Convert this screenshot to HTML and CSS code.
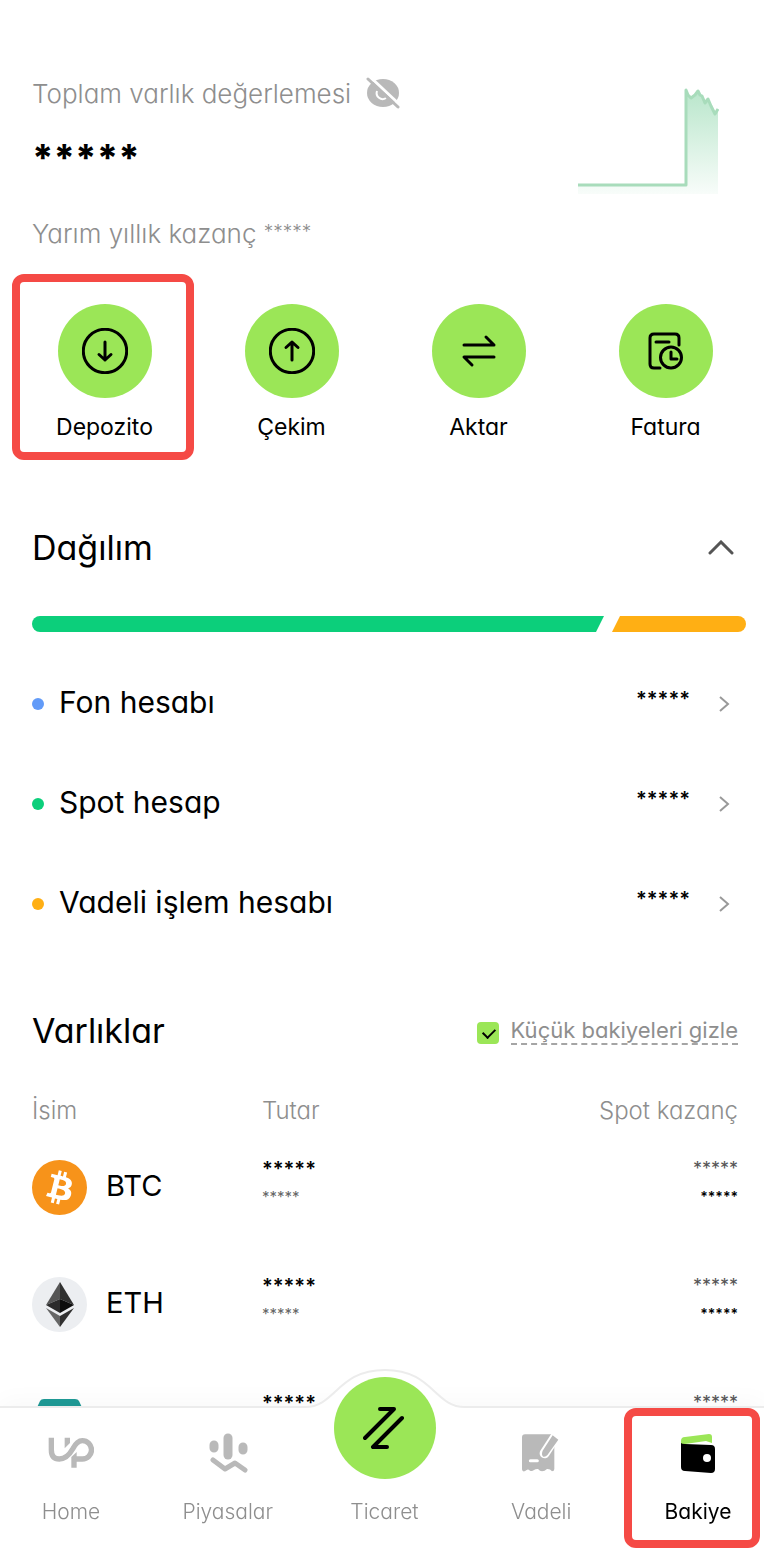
FILE: index.html
```html
<!DOCTYPE html>
<html lang="tr">
<head>
    <meta charset="UTF-8">
    <meta name="viewport" content="width=device-width, initial-scale=1.0">
    <title>Bakiye</title>
    <link rel="stylesheet" href="styles.css">
</head>
<body>
    <main>
        <section class="summary">
            <div class="summary-info">
                <div class="summary-label">
                    <span>Toplam varlık değerlemesi</span>
                    <button class="icon-btn" aria-label="Bakiyeyi göster">
                        <svg width="34" height="34" viewBox="0 0 34 34">
                            <ellipse cx="17" cy="17" rx="16" ry="14" fill="#b9b9b9"/>
                            <path d="M11 15a6 6 0 0 0 9 7" fill="none" stroke="#fff" stroke-width="2"/>
                            <path d="M3 0L34 29" stroke="#fff" stroke-width="3"/>
                            <path d="M2 3L32 31" stroke="#b9b9b9" stroke-width="3" stroke-linecap="round"/>
                        </svg>
                    </button>
                </div>
                <p class="total">*****</p>
                <p class="profit">Yarım yıllık kazanç <span class="profit-value">*****</span></p>
            </div>
            <svg class="chart" width="142" height="106" viewBox="0 0 142 106">
                <defs>
                    <linearGradient id="chartFill" x1="0" y1="0" x2="0" y2="1">
                        <stop offset="0" stop-color="#b9e6cb"/>
                        <stop offset="1" stop-color="#b9e6cb" stop-opacity="0.1"/>
                    </linearGradient>
                </defs>
                <path d="M1 97H109V2L111 7L114 10L118 7L121 3L123 7L125 8L128 15L131 11L134 18L138 26L141 21V106H1Z" fill="url(#chartFill)"/>
                <path d="M1 97H109V2L111 7L114 10L118 7L121 3L123 7L125 8L128 15L131 11L134 18L138 26L141 21" fill="none" stroke="#a8dcbb" stroke-width="3" stroke-linejoin="round"/>
            </svg>
        </section>

        <section class="actions">
            <button class="action highlight">
                <span class="action-icon">
                    <svg width="46" height="46" viewBox="0 0 46 46">
                        <circle cx="23" cy="23" r="21.7"/>
                        <path d="M23 14V32M17 26.500L23 32L29 26.500"/>
                    </svg>
                </span>
                Depozito
            </button>
            <button class="action">
                <span class="action-icon">
                    <svg width="46" height="46" viewBox="0 0 46 46">
                        <circle cx="23" cy="23" r="21.7"/>
                        <path d="M23 32V14M17 19.500L23 14L29 19.500"/>
                    </svg>
                </span>
                Çekim
            </button>
            <button class="action">
                <span class="action-icon">
                    <svg width="46" height="46" viewBox="0 0 46 46">
                        <path d="M8 17H38L30 9M38 29H8L16 37"/>
                    </svg>
                </span>
                Aktar
            </button>
            <button class="action">
                <span class="action-icon">
                    <svg width="46" height="46" viewBox="0 0 46 46">
                        <path d="M17 40H11Q7 40 7 36V10Q7 6 11 6H32Q36 6 36 10V17M13 14H26"/>
                        <circle cx="28" cy="29.500" r="10.500"/>
                        <path d="M28 24V31H34"/>
                    </svg>
                </span>
                Fatura
            </button>
        </section>

        <section class="distribution">
            <div class="section-head">
                <h2>Dağılım</h2>
                <button class="icon-btn" aria-label="Daralt">
                    <svg width="26" height="16" viewBox="0 0 26 16">
                        <path d="M2 13L13 2L24 13" fill="none" stroke="#555" stroke-width="3" stroke-linecap="round"/>
                    </svg>
                </button>
            </div>
            <div class="bar">
                <div class="bar-spot"></div>
                <div class="bar-futures"></div>
            </div>
            <ul class="accounts">
                <li>
                    <a href="#">
                        <span class="dot blue"></span>
                        <span class="account-name">Fon hesabı</span>
                        <span class="stars">*****</span>
                        <svg width="12" height="18" viewBox="0 0 12 18"><path d="M2 2L10 9L2 16"/></svg>
                    </a>
                </li>
                <li>
                    <a href="#">
                        <span class="dot green"></span>
                        <span class="account-name">Spot hesap</span>
                        <span class="stars">*****</span>
                        <svg width="12" height="18" viewBox="0 0 12 18"><path d="M2 2L10 9L2 16"/></svg>
                    </a>
                </li>
                <li>
                    <a href="#">
                        <span class="dot orange"></span>
                        <span class="account-name">Vadeli işlem hesabı</span>
                        <span class="stars">*****</span>
                        <svg width="12" height="18" viewBox="0 0 12 18"><path d="M2 2L10 9L2 16"/></svg>
                    </a>
                </li>
            </ul>
        </section>

        <section class="assets">
            <div class="assets-head">
                <h2>Varlıklar</h2>
                <div class="hide-small">
                    <input type="checkbox" id="hideSmall" checked>
                    <label for="hideSmall">Küçük bakiyeleri gizle</label>
                </div>
            </div>
            <table>
                <thead>
                    <tr>
                        <th class="col-name">İsim</th>
                        <th>Tutar</th>
                        <th class="col-profit">Spot kazanç</th>
                    </tr>
                </thead>
                <tbody>
                    <tr>
                        <td>
                            <div class="coin">
                                <svg width="55" height="55" viewBox="0 0 32 32">
                                    <circle cx="16" cy="16" r="16" fill="#f7931a"/>
                                    <path fill="#fff" d="M23.189 14.020c.314-2.096-1.283-3.223-3.465-3.975l.708-2.840-1.728-.430-.690 2.765c-.454-.114-.920-.220-1.385-.326l.695-2.783L15.596 6l-.708 2.839c-.376-.086-.746-.170-1.104-.260l.002-.009-2.384-.595-.460 1.846s1.283.294 1.256.312c.700.175.826.638.805 1.006l-.806 3.235c.048.012.110.030.180.057l-.183-.045-1.130 4.532c-.086.212-.303.531-.793.410.018.025-1.256-.313-1.256-.313l-.858 1.978 2.250.561c.418.105.828.215 1.231.318l-.715 2.872 1.727.430.708-2.840c.472.127.930.245 1.378.357l-.706 2.828 1.728.430.715-2.866c2.948.558 5.164.333 6.097-2.333.752-2.146-.037-3.385-1.588-4.192 1.130-.260 1.980-1.003 2.207-2.538zm-3.950 5.538c-.533 2.147-4.148.986-5.320.695l.950-3.805c1.172.293 4.929.872 4.370 3.110zm.535-5.569c-.487 1.953-3.495.960-4.470.717l.860-3.450c.975.243 4.118.696 3.610 2.733z"/>
                                </svg>
                                <span>BTC</span>
                            </div>
                        </td>
                        <td class="values">
                            <div class="amount">*****</div>
                            <div class="amount-sub">*****</div>
                        </td>
                        <td class="values col-profit">
                            <div class="profit-main">*****</div>
                            <div class="profit-sub">*****</div>
                        </td>
                    </tr>
                    <tr>
                        <td>
                            <div class="coin">
                                <svg width="55" height="55" viewBox="0 0 55 55">
                                    <circle cx="27.500" cy="27.500" r="27.500" fill="#eceef1"/>
                                    <path d="M28 5L14 28L28 22Z" fill="#555"/>
                                    <path d="M28 5L42 28L28 22Z" fill="#303030"/>
                                    <path d="M14 28L28 22V36Z" fill="#2b2b2b"/>
                                    <path d="M42 28L28 22V36Z" fill="#0d0d0d"/>
                                    <path d="M14 31L28 39V50Z" fill="#666"/>
                                    <path d="M42 31L28 39V50Z" fill="#303030"/>
                                </svg>
                                <span>ETH</span>
                            </div>
                        </td>
                        <td class="values">
                            <div class="amount">*****</div>
                            <div class="amount-sub">*****</div>
                        </td>
                        <td class="values col-profit">
                            <div class="profit-main">*****</div>
                            <div class="profit-sub">*****</div>
                        </td>
                    </tr>
                    <tr>
                        <td>
                            <div class="coin">
                                <svg width="55" height="55" viewBox="0 0 55 55">
                                    <path d="M12 5H43Q46 5 47 7L54 22L27 50L1 22L8 7Q9 5 12 5Z" fill="#1f9a96"/>
                                    <path d="M14 12H41V17H14Z" fill="#fff"/>
                                </svg>
                                <span>USDT</span>
                            </div>
                        </td>
                        <td class="values">
                            <div class="amount">*****</div>
                            <div class="amount-sub">*****</div>
                        </td>
                        <td class="values col-profit">
                            <div class="profit-main">*****</div>
                            <div class="profit-sub">*****</div>
                        </td>
                    </tr>
                </tbody>
            </table>
        </section>
    </main>

    <nav class="tabs">
        <a href="#" class="tab">
            <span class="tab-icon">
                <svg width="46" height="32" viewBox="0 0 138 96">
                    <path d="M10 2V38C10 57 19 66 34 66C55 66 66 50 74 36C84 17 92 11 103 11A27 27 0 0 1 103 66H84" fill="none" stroke="#b9b9b9" stroke-width="16"/>
                    <path d="M50 2H66V18L50 34ZM70 60L86 45V92H70Z" fill="#b9b9b9"/>
                </svg>
            </span>
            Home
        </a>
        <a href="#" class="tab">
            <span class="tab-icon">
                <svg width="40" height="40" viewBox="0 0 40 40" fill="none" stroke="#b9b9b9" stroke-linecap="round" stroke-linejoin="round">
                    <path d="M6 12V15M35 14V17" stroke-width="9"/>
                    <path d="M20 5V22" stroke-width="9"/>
                    <path d="M5 27L17 36L27 30L37 37" stroke-width="5"/>
                </svg>
            </span>
            Piyasalar
        </a>
        <a href="#" class="tab trade">
            <svg class="bump" width="160" height="40" viewBox="0 0 160 40">
                <path d="M0 38C31 38 32 1 80 1C128 1 129 38 160 38V40H0Z" fill="#fff"/>
                <path d="M0 38C31 38 32 1 80 1C128 1 129 38 160 38" fill="none" stroke="#ececec" stroke-width="2"/>
            </svg>
            <span class="trade-icon">
                <svg width="44" height="44" viewBox="0 0 44 44" fill="none" stroke="#000" stroke-width="4" stroke-linecap="round" stroke-linejoin="round">
                    <path d="M17 3H31L2 32M39 12L10 41H24"/>
                </svg>
            </span>
            Ticaret
        </a>
        <a href="#" class="tab">
            <span class="tab-icon">
                <svg width="38" height="38" viewBox="0 0 114 114">
                    <path d="M9 1H97V105Q97 112 90 112Q84 104 75 105Q68 112 60 112Q54 112 48 105Q42 104 36 108Q30 113 24 110Q18 104 14 108Q8 113 4 112Q0 111 0 106V10Q0 1 9 1Z" fill="#b9b9b9"/>
                    <path d="M108 -4L68 58" fill="none" stroke="#fff" stroke-width="30" stroke-linecap="round"/>
                    <path d="M92 4L109 17L80 58Q74 69 64 68Q57 62 62 50Z" fill="#b9b9b9"/>
                    <path d="M25 80H46" stroke="#fff" stroke-width="9" stroke-linecap="round"/>
                </svg>
            </span>
            Vadeli
        </a>
        <a href="#" class="tab active">
            <span class="tab-icon">
                <svg width="34" height="40" viewBox="0 0 34 40">
                    <path d="M0 11V8Q0 4 4 4L28 1Q31 1 31 4V10L25 8L4 11Z" fill="#9be657"/>
                    <path d="M4 11L30 12Q34 12 34 16V36Q34 40 30 40L4 38Q0 38 0 34V10Q1 11 4 11Z" fill="#000"/>
                    <circle cx="26" cy="25" r="4" fill="#fff"/>
                </svg>
            </span>
            Bakiye
        </a>
    </nav>
</body>
</html>
```
FILE: styles.css
```css
* {
    box-sizing: border-box;
}
body {
    margin: 0;
    height: 100vh;
    overflow: hidden;
    background: #fff;
    color: #000;
    font-family: Inter, "Liberation Sans", sans-serif;
    font-feature-settings: "cv11";
}
h2, p, ul {
    margin: 0;
    padding: 0;
    font-weight: 400;
}
h2 {
    font-size: 34px;
    line-height: 40px;
}
button {
    font: inherit;
    font-feature-settings: inherit;
    color: inherit;
    background: none;
    padding: 0;
    border: none;
    cursor: pointer;
}
a {
    color: inherit;
    text-decoration: none;
}
svg {
    display: block;
    flex: none;
}

/* Total value */
.summary {
    display: flex;
    justify-content: space-between;
    padding: 76px 45px 0 32px;
}
.summary-label {
    display: flex;
    align-items: center;
    gap: 15px;
    height: 34px;
    color: #8e8e8e;
    font-size: 26px;
    font-weight: 300;
}
.total {
    margin-top: 24px;
    font-size: 37px;
    font-weight: 800;
    line-height: 48px;
}
.profit {
    margin-top: 36px;
    color: #8e8e8e;
    font-size: 26px;
    font-weight: 300;
    line-height: 32px;
}
.profit-value {
    font-size: 19px;
    line-height: 20px;
    vertical-align: 5px;
}
.chart {
    margin-top: 12px;
}

/* Action buttons */
.actions {
    display: grid;
    grid-template-columns: repeat(4, 1fr);
    gap: 5px;
    padding: 0 9px 0 12px;
    margin-top: 24px;
}
.action {
    display: flex;
    flex-direction: column;
    align-items: center;
    gap: 13px;
    height: 186px;
    padding: 22px 0 0 3px;
    border: 8px solid transparent;
    border-radius: 12px;
    font-size: 23px;
    line-height: 32px;
}
.action.highlight {
    border-color: #f54a45;
}
.action-icon {
    display: flex;
    align-items: center;
    justify-content: center;
    width: 94px;
    height: 94px;
    border-radius: 50%;
    background: #9be657;
}
.action-icon svg {
    fill: none;
    stroke: #000;
    stroke-width: 3;
    stroke-linecap: round;
    stroke-linejoin: round;
}

/* Distribution */
.section-head {
    display: flex;
    justify-content: space-between;
    align-items: center;
    padding: 0 30px 0 32px;
    margin-top: 68px;
}
.bar {
    display: flex;
    gap: 8px;
    height: 16px;
    margin: 48px 18px 0 32px;
}
.bar-spot {
    flex: 572;
    background: #0ccf7b;
    border-radius: 8px 0 0 8px;
    clip-path: polygon(0 0, 100% 0, calc(100% - 8px) 100%, 0 100%);
}
.bar-futures {
    flex: 134;
    background: #ffaf14;
    border-radius: 0 8px 8px 0;
    clip-path: polygon(8px 0, 100% 0, 100% 100%, 0 100%);
}
.accounts {
    list-style: none;
    margin-top: 22px;
    padding: 0 34px 0 32px;
}
.accounts a {
    display: flex;
    align-items: center;
    height: 100px;
    font-size: 30px;
}
.account-name {
    flex: 1;
    padding-bottom: 4px;
}
.accounts svg {
    margin-left: 28px;
    fill: none;
    stroke: #999;
    stroke-width: 2;
}
.dot {
    width: 12px;
    height: 12px;
    margin-right: 15px;
    border-radius: 50%;
}
.blue {
    background: #629bf8;
}
.green {
    background: #0ccf7b;
}
.orange {
    background: #ffaf14;
}
.stars, .amount {
    font-size: 20px;
    font-weight: 600;
}
.stars {
    padding-bottom: 10px;
}

/* Assets */
.assets {
    padding: 0 26px 0 32px;
    margin-top: 57px;
}
.assets-head {
    display: flex;
    justify-content: space-between;
    align-items: center;
}
.hide-small {
    display: flex;
    align-items: center;
    gap: 12px;
    color: #8e8e8e;
    font-size: 22px;
}
.hide-small input {
    appearance: none;
    width: 22px;
    height: 22px;
    margin: 4px 0 0;
    border-radius: 4px;
    background: #9be657;
}
.hide-small input:checked::before {
    content: "";
    display: block;
    width: 10px;
    height: 6px;
    margin: 6px 0 0 6px;
    border: solid #000;
    border-width: 0 0 2px 2px;
    transform: rotate(-45deg);
}
.hide-small label {
    line-height: 26px;
    border-bottom: 2px dashed #a5a5a5;
}
table {
    width: 100%;
    margin-top: 41px;
    border-collapse: collapse;
}
th {
    padding: 0;
    height: 37px;
    color: #8e8e8e;
    font-size: 24px;
    font-weight: 300;
    text-align: left;
}
td {
    padding: 0;
    height: 117px;
    vertical-align: middle;
}
.values {
    padding-bottom: 9px;
}
.col-name {
    width: 230px;
}
.col-profit {
    text-align: right;
}
.coin {
    display: flex;
    align-items: center;
    gap: 19px;
    font-size: 29px;
}
.coin span {
    padding-bottom: 4px;
}
.amount, .amount-sub, .profit-main, .profit-sub {
    line-height: 28px;
}
.amount-sub {
    color: #666;
    font-size: 15px;
}
.profit-main {
    color: #555;
    font-size: 18px;
}
.profit-sub {
    font-size: 14px;
    font-weight: 600;
}

/* Bottom tabs */
.tabs {
    position: fixed;
    left: 0;
    right: 0;
    bottom: 0;
    display: flex;
    justify-content: space-between;
    height: 144px;
    padding: 0 3px 0 8px;
    background: #fff;
    border-top: 2px solid #ececec;
    box-shadow: 0 -4px 24px rgba(0, 0, 0, 0.03);
}
.tab {
    position: relative;
    display: flex;
    flex-direction: column;
    align-items: center;
    width: 126px;
    color: #8e8e8e;
    font-size: 21px;
    font-weight: 300;
    line-height: 30px;
}
.tab-icon {
    display: flex;
    align-items: center;
    height: 40px;
    margin: 25px 0 24px;
}
.tab.active {
    color: #000;
    font-weight: 400;
}
.tab.active::after {
    content: "";
    position: absolute;
    inset: 0 1px 2px -11px;
    border: 8px solid #f54a45;
    border-radius: 12px;
}
.bump {
    position: absolute;
    top: -39px;
}
.trade-icon {
    position: relative;
    display: flex;
    align-items: center;
    justify-content: center;
    width: 102px;
    height: 102px;
    margin: -31px 0 18px;
    border-radius: 50%;
    background: #9be657;
}
```
